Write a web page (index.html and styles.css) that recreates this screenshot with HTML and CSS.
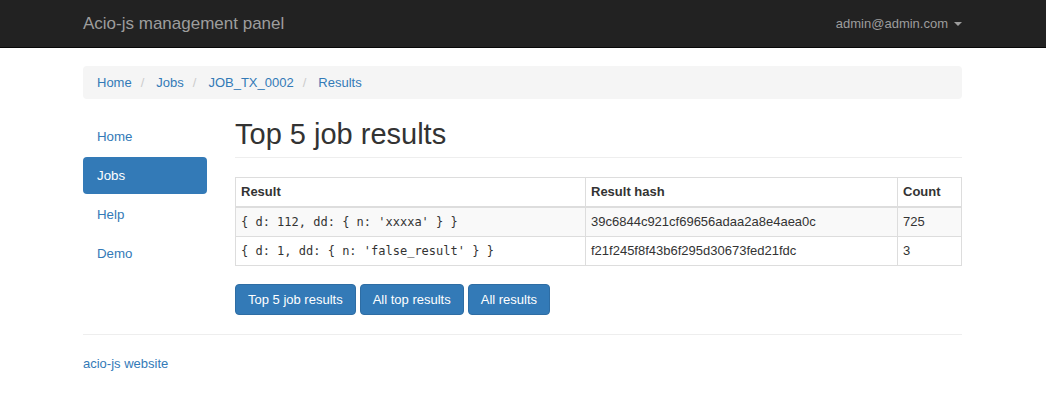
FILE: index.html
```html
<!DOCTYPE html>
<html>
<head>
<meta charset="utf-8">
<title>Acio-js management panel</title>
<link rel="stylesheet" href="styles.css">
</head>
<body>
<nav class="navbar">
  <div class="container navbar-inner">
    <a class="brand" href="#">Acio-js management panel</a>
    <a class="user" href="#">admin@admin.com <span class="caret"></span></a>
  </div>
</nav>
<div class="container">
  <ol class="breadcrumb">
    <li><a href="#">Home</a></li>
    <li class="sep">/</li>
    <li><a href="#">Jobs</a></li>
    <li class="sep">/</li>
    <li><a href="#">JOB_TX_0002</a></li>
    <li class="sep">/</li>
    <li><a href="#">Results</a></li>
  </ol>
  <div class="row">
    <ul class="sidenav">
      <li><a href="#">Home</a></li>
      <li class="active"><a href="#">Jobs</a></li>
      <li><a href="#">Help</a></li>
      <li><a href="#">Demo</a></li>
    </ul>
    <main class="main">
      <h1 class="page-header">Top 5 job results</h1>
      <table class="table">
        <thead>
          <tr><th class="c1">Result</th><th class="c2">Result hash</th><th>Count</th></tr>
        </thead>
        <tbody>
          <tr class="odd"><td class="mono">{ d: 112, dd: { n: 'xxxxa' } }</td><td>39c6844c921cf69656adaa2a8e4aea0c</td><td>725</td></tr>
          <tr><td class="mono">{ d: 1, dd: { n: 'false_result' } }</td><td>f21f245f8f43b6f295d30673fed21fdc</td><td>3</td></tr>
        </tbody>
      </table>
      <div class="buttons">
        <a class="btn" href="#">Top 5 job results</a>
        <a class="btn" href="#">All top results</a>
        <a class="btn" href="#">All results</a>
      </div>
    </main>
  </div>
  <footer class="footer">
    <a href="#">acio-js website</a>
  </footer>
</div>
</body>
</html>
```
FILE: styles.css
```css
* { box-sizing: border-box; }
html, body { margin: 0; padding: 0; }
body {
  font-family: "Liberation Sans", Arial, Helvetica, sans-serif;
  font-size: 13px;
  line-height: 19px;
  color: #333;
  background: #fff;
}
a { color: #337ab7; text-decoration: none; }
.container { width: 879px; margin: 0 84px 0 83px; }

.navbar {
  height: 48px;
  background: #222;
  border-bottom: 1px solid #080808;
}
.navbar-inner {
  height: 47px;
  display: flex;
  align-items: center;
  justify-content: space-between;
}
.brand { color: #9d9d9d; font-size: 17px; line-height: 20px; }
.user { color: #9d9d9d; display: flex; align-items: center; gap: 6px; }
.caret {
  display: inline-block;
  width: 0; height: 0;
  border-top: 4px solid #9d9d9d;
  border-left: 4px solid transparent;
  border-right: 4px solid transparent;
  margin-top: 1px;
}

.breadcrumb {
  list-style: none;
  margin: 18px 0 19px;
  padding: 7px 14px;
  height: 33px;
  background: #f5f5f5;
  border-radius: 4px;
  display: flex;
  align-items: center;
  font-size: 13px;
}
.breadcrumb .sep { color: #ccc; padding: 0 12px 0 9px; }

.row { display: flex; gap: 28px; align-items: flex-start; }
.sidenav {
  list-style: none;
  margin: 0;
  padding: 0;
  width: 124px;
  flex: none;
  display: flex;
  flex-direction: column;
  gap: 2px;
  font-size: 13.3px;
}
.sidenav a {
  display: block;
  padding: 9px 14px;
  border-radius: 4px;
}
.sidenav .active a { background: #337ab7; color: #fff; }

.main { flex: 1; padding-top: 1px; }
.page-header {
  font-size: 29px;
  font-weight: 500;
  line-height: 31px;
  margin: 0 0 19px;
  padding-bottom: 7px;
  border-bottom: 1px solid #eee;
}

.table {
  width: 100%;
  border-collapse: collapse;
  border: 1px solid #ddd;
  margin-bottom: 18px;
}
.table th, .table td {
  border: 1px solid #ddd;
  padding: 5px;
  line-height: 18px;
  text-align: left;
  vertical-align: top;
}
.table thead th { border-bottom-width: 2px; font-weight: bold; }
.table .c1 { width: 350px; }
.table .c2 { width: 312px; }
.table tr.odd td { background: #f9f9f9; }
.mono { font-family: "DejaVu Sans Mono", "Liberation Mono", monospace; font-size: 12px; }

.buttons { display: flex; gap: 4px; }
.btn {
  display: inline-block;
  padding: 5px 12px;
  line-height: 19px;
  color: #fff;
  background: #337ab7;
  border: 1px solid #2e6da4;
  border-radius: 4px;
}

.footer {
  margin-top: 19px;
  border-top: 1px solid #eee;
  padding-top: 19px;
}
```
